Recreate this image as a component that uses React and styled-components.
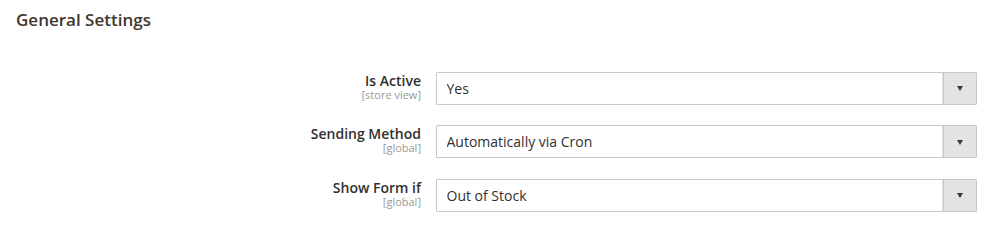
import styled, { createGlobalStyle } from 'styled-components';

const GlobalStyle = createGlobalStyle`
    body {
        margin: 0;
        background: #fff;
        font-family: "Open Sans", "Liberation Sans", sans-serif;
        color: #303030;
    }
`

const fields = [
    { label: 'Is Active', scope: '[store view]', value: 'Yes', options: ['Yes', 'No'] },
    { label: 'Sending Method', scope: '[global]', value: 'Automatically via Cron', options: ['Automatically via Cron', 'Manually'] },
    { label: 'Show Form if', scope: '[global]', value: 'Out of Stock', options: ['Out of Stock', 'Always'] },
]

const App = () => {
    return (
        <Page>
            <GlobalStyle />
            <Title>General Settings</Title>
            <Fieldset>
                {fields.map((f) => (
                    <Row key={f.label}>
                        <Label>
                            <LabelText>{f.label}</LabelText>
                            <Scope>{f.scope}</Scope>
                        </Label>
                        <SelectWrap>
                            <Select defaultValue={f.value}>
                                {f.options.map((o) => <option key={o}>{o}</option>)}
                            </Select>
                            <Arrow />
                        </SelectWrap>
                    </Row>
                ))}
            </Fieldset>
        </Page>
    );
};

export default App;

const Page = styled.div`
    padding: 10.4px 23px 0 16px;
`

const Title = styled.h2`
    margin: 0;
    font-size: 17px;
    line-height: 20px;
    font-weight: 600;
    color: #41362f;
`

const Fieldset = styled.div`
    display: flex;
    flex-direction: column;
    gap: 20.5px;
    margin-top: 41.6px;
`

const Row = styled.div`
    display: grid;
    grid-template-columns: 405px 1fr;
    column-gap: 14.5px;
    align-items: start;
`

const Label = styled.div`
    text-align: right;
    padding-top: 1px;
`

const LabelText = styled.div`
    font-size: 14px;
    line-height: 16px;
    font-weight: 600;
    color: #303030;
`

const Scope = styled.div`
    font-size: 11px;
    line-height: 12px;
    color: #999;
`

const SelectWrap = styled.div`
    position: relative;
    height: 33px;
`

const Select = styled.select`
    appearance: none;
    width: 100%;
    height: 33px;
    margin: 0;
    box-sizing: border-box;
    border: 1px solid #c8c8c8;
    border-radius: 1px;
    background: linear-gradient(#e3e3e3, #e3e3e3) right top / 34px 100% no-repeat, #fff;
    padding: 0 40px 0 10px;
    font-family: "Open Sans", "Liberation Sans", sans-serif;
    font-size: 14px;
    color: #303030;
    outline: none;

    &::-ms-expand { display: none; }
`

const Arrow = styled.span`
    position: absolute;
    top: 0;
    right: 0;
    width: 34px;
    height: 33px;
    box-sizing: border-box;
    border-left: 1px solid #c8c8c8;
    pointer-events: none;

    &::after {
        content: '';
        position: absolute;
        left: 50%;
        top: 14.5px;
        margin-left: -3.5px;
        border-style: solid;
        border-width: 5px 3.5px 0 3.5px;
        border-color: #41362f transparent transparent transparent;
    }
`
